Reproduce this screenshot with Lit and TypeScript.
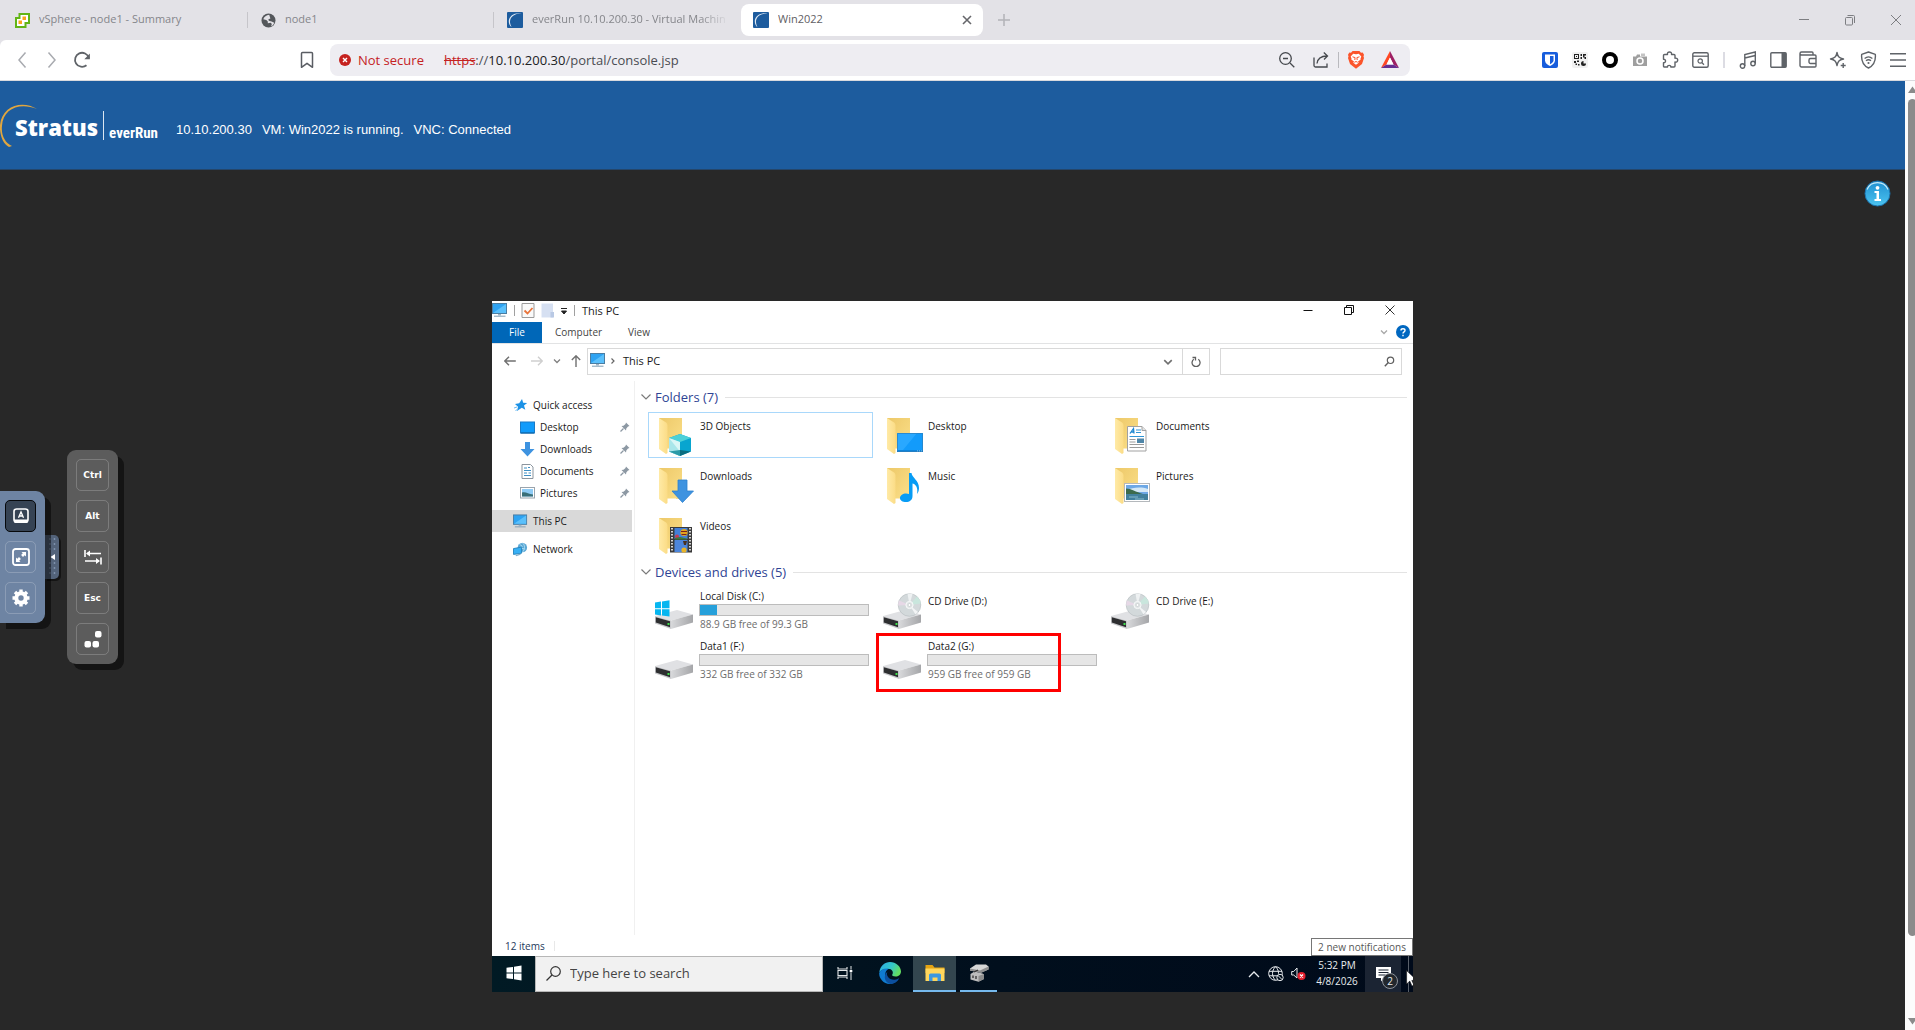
import { LitElement, html, css, svg, nothing, TemplateResult } from "lit";
import { customElement } from "lit/decorators.js";
import { classMap } from "lit/directives/class-map.js";
import { styleMap } from "lit/directives/style-map.js";

/* ---------- shared ---------- */

const reset = css`
  * {
    box-sizing: border-box;
  }
  button {
    font: inherit;
    color: inherit;
    background: none;
    border: 0;
    padding: 0;
    margin: 0;
    text-align: left;
  }
  input {
    font: inherit;
    color: inherit;
    background: none;
    border: 0;
    padding: 0;
    margin: 0;
    outline: 0;
    min-width: 0;
  }
  a {
    color: inherit;
    text-decoration: none;
  }
  svg {
    display: block;
    flex: none;
  }
`;

const icon = (w: number, h: number, body: unknown, box = `0 0 ${w} ${h}`) =>
  html`<svg width=${w} height=${h} viewBox=${box} fill="none" aria-hidden="true">${body}</svg>`;

/* ---------- browser icons ---------- */

const g = "#5f6368";

const vsphereIcon = icon(15, 15, svg`
  <path d="M4.500 1h9.500v9H10.500v4H1V5h3.500z" fill="#fff" stroke="#62b515" stroke-width="2"/>
  <rect x="7.500" y="3.500" width="3.500" height="3.500" fill="#f9a51b"/><rect x="3.500" y="7.500" width="3.500" height="3.500" fill="#f9a51b"/>`);

const globeIcon = icon(15, 15, svg`
  <circle cx="7.500" cy="7.500" r="7" fill="#54575b"/>
  <path d="M8.200 1.800C5.500 2 3 4 2.300 6.200l3 .8 1.500 1.600v1.600l3-.4 1 1.200-.6 2.200c1.500-.6 2.600-2 3-3.500l-2.600-1.300-2.800-.7-.4-1.500 2-.8z" fill="#e3e2e7"/>`);

const stratusIcon = icon(16, 16, svg`
  <rect width="16" height="16" rx="1" fill="#1d5c9e"/>
  <path d="M14.500 1.500C8 0 2.500 3.500 1.800 8.500c-.2 3 1 5.500 2.700 6.500C3 12 2.500 9.500 3.500 7 5 3.500 9 1.500 14.500 1.500z" fill="#dfe9f4"/>`);

const chromeIcons = {
  back: icon(16, 18, svg`<path d="M11.500 1.500 5 9l6.500 7.500" stroke="#a9abb0" stroke-width="1.500"/>`),
  forward: icon(16, 18, svg`<path d="M4.500 1.500 11 9l-6.500 7.500" stroke="#a9abb0" stroke-width="1.500"/>`),
  reload: icon(18, 18, svg`<path d="M13.500 14.200A7 7 0 1 1 15.800 7" stroke="${g}" stroke-width="1.800"/><path d="M16.900 2.500v5.800h-5.600z" fill="${g}"/>`),
  bookmark: icon(16, 18, svg`<path d="M2.500 2.500a1 1 0 0 1 1-1h9a1 1 0 0 1 1 1v13.800L8 12.300l-5.500 4z" stroke="#5a5d63" stroke-width="1.500" stroke-linejoin="round"/>`),
  zoomOut: icon(18, 18, svg`<circle cx="7.500" cy="7.500" r="5.800" stroke="#45484d" stroke-width="1.300"/><path d="M12 12l4.300 4.300M5 7.500h5" stroke="#45484d" stroke-width="1.300"/>`),
  share: icon(18, 18, svg`<path d="M2 6.500v8a1.500 1.500 0 0 0 1.500 1.500h11.500v-3.500" stroke="#45484d" stroke-width="1.300"/><path d="M5 12.500C5.500 8 8 5.200 15 5M11.800 1.500 15.500 5l-3.500 3.500" stroke="#45484d" stroke-width="1.300"/>`),
  brave: icon(16, 19, svg`
    <path d="M4.600 1h6.800L13 2.700l1.700-.2L16 4.800l-.5 1.600L16 8l-2 6-6 4.700L2 14 0 8l.5-1.600L0 4.800l1.300-2.300L3 2.700z" fill="#fb542b"/>
    <path d="M5.200 3.800 8 4.300l2.800-.5 2.500 2.600-.8 2 .2 1.100-2.700 1.900.7 1.300L8 14.800l-2.700-2.100.7-1.300-2.700-1.900.2-1.100-.8-2z" fill="#fff"/>
    <path d="M4.500 6.800l2.600.8-.3 2.400M11.500 6.800l-2.600.8.300 2.400M6.300 12.300 8 11.500l1.700.8" stroke="#fb542b" stroke-width="1"/>`),
  bat: icon(18, 17, svg`
    <path d="M9 0 0 17l5.500-3.500L9 6.500z" fill="#ff4724"/><path d="M9 0l9 17-5.500-3.500L9 6.500z" fill="#9e1f63"/><path d="M0 17h18l-5.500-3.500h-7z" fill="#662d91"/><path d="M9 6.500l3.500 7h-7z" fill="#fff"/>`),
  bitwarden: icon(16, 16, svg`<rect width="16" height="16" rx="2" fill="#175ddc"/><path d="M3 2.500h10v6c0 2.600-2.400 4.200-5 5.500-2.600-1.300-5-2.900-5-5.500z" fill="#fff"/><path d="M8 4h3.500v4.500c0 1.600-1.600 2.700-3.500 3.700z" fill="#175ddc"/>`),
  qr: icon(16, 16, svg`<rect width="16" height="16" rx="2" fill="#f1f1f1"/>
    <rect x="2.500" y="2.500" width="4" height="4" stroke="#222"/><path d="M4 4h1v1H4zM8.500 2h1.500v2H8.500zM11 2h3v1.500h-1.500v1.500H14V7h-1.500V5.500H11zM8.500 5H10v2H8.500zM2 9h2v2H2zM5 8.500h2V10H5zM3.500 11.500H5V13H3.500zM6 12h1.500v1.500H6z" fill="#222"/><circle cx="11.500" cy="11.500" r="2.500" fill="#222"/><path d="M11.500 8.500h3v3h-3z" fill="#f1f1f1"/>`),
  ring: icon(16, 16, svg`<circle cx="8" cy="8" r="6" stroke="#000" stroke-width="4"/>`),
  camera: icon(16, 16, svg`<path d="M1 4.500h3L5 2.500h3v2h7V14H1z" fill="#9f9f9f"/><path d="M9 1.500h4v2.500H9z" fill="#c4c4c4"/><circle cx="8" cy="9" r="3" fill="#9f9f9f" stroke="#fff" stroke-width="1.500"/>`),
  puzzle: icon(18, 18, svg`<path d="M2.500 4.500a1 1 0 0 1 1-1h3c-.8-3.400 4.800-3.400 4 0h2.500a1 1 0 0 1 1 1v2.700c3.600-.9 3.600 4.700 0 3.800V15a1 1 0 0 1-1 1H9.800c.3-2.200-3.600-2.200-3.300 0h-3a1 1 0 0 1-1-1v-3.200c2.700.3 2.700-3.900 0-3.600z" stroke="${g}" stroke-width="1.400" stroke-linejoin="round"/>`),
  tabSearch: icon(17, 16, svg`<rect x=".8" y=".8" width="15.400" height="14.400" rx="1.500" stroke="${g}" stroke-width="1.400"/><path d="M1 4.200h15" stroke="${g}" stroke-width="1.300"/><circle cx="8.200" cy="9" r="2.200" stroke="${g}" stroke-width="1.200"/><path d="M10 10.800l2 2" stroke="${g}" stroke-width="1.300"/>`),
  music: icon(18, 18, svg`<circle cx="3.500" cy="15" r="2.200" stroke="${g}" stroke-width="1.400"/><circle cx="14" cy="12.500" r="2.200" stroke="${g}" stroke-width="1.400"/><path d="M5.800 15V3.500L16.300 1v11.500M5.800 7 16.300 4.500" stroke="${g}" stroke-width="1.400"/>`),
  sidebar: icon(17, 16, svg`<rect x=".8" y=".8" width="15.400" height="14.400" rx="1" stroke="${g}" stroke-width="1.400"/><path d="M11.500 1H16v14h-4.500z" fill="${g}"/>`),
  wallet: icon(18, 17, svg`<path d="M14 3.500V2a1 1 0 0 0-1-1H2.500a1.500 1.500 0 0 0 0 3H16a1 1 0 0 1 1 1v10a1 1 0 0 1-1 1H2.500A1.500 1.500 0 0 1 1 14.500V2.500" stroke="${g}" stroke-width="1.400"/><path d="M17 7.500h-5.500a1.500 1.500 0 0 0-1.500 1.500v2a1.500 1.500 0 0 0 1.500 1.500H17" stroke="${g}" stroke-width="1.400"/>`),
  leo: icon(18, 18, svg`<path d="M8 1.500c.8 4.300 2.200 5.700 6.500 6.500-4.300.8-5.700 2.200-6.500 6.500-.8-4.300-2.200-5.700-6.500-6.500 4.300-.8 5.700-2.200 6.500-6.500z" stroke="${g}" stroke-width="1.400" stroke-linejoin="round"/><path d="M14.200 12v5M11.700 14.500h5" stroke="${g}" stroke-width="1.400"/>`),
  vpn: icon(17, 18, svg`<path d="M8.500 1 15.300 3.300c.6 6-1.300 11-6.800 13.700C3 14.300 1.100 9.300 1.700 3.300z" stroke="${g}" stroke-width="1.400" stroke-linejoin="round"/><path d="M4.600 7.500c2.300-2 5.500-2 7.800 0M6 9.800c1.500-1.300 3.500-1.300 5 0" stroke="${g}" stroke-width="1.300"/><circle cx="8.500" cy="12" r="1.100" fill="${g}"/>`),
  menu: icon(18, 16, svg`<path d="M1 1.800h16M1 8h16M1 14.200h16" stroke="${g}" stroke-width="1.600"/>`),
};

@customElement("browser-tabs")
class BrowserTabs extends LitElement {
  static styles = [
    reset,
    css`
      :host {
        display: flex;
        height: 40px;
        background: #e3e2e7;
        color: #85868b;
        font-size: 11px;
        line-height: 16px;
      }
      .tabs {
        display: flex;
        padding-left: 2px;
      }
      .tab {
        display: flex;
        align-items: center;
        gap: 9px;
        width: 246px;
        padding: 0 10px 0 13px;
        border-right: 1px solid transparent;
        border-image: linear-gradient(transparent 12px, #c6c5ca 12px, #c6c5ca 28px, transparent 28px) 1;
      }
      .tab.before {
        border-image: none;
      }
      .tab.active {
        width: 242px;
        height: 32px;
        margin: 4px 3px 0 1px;
        padding: 0 10px 0 12px;
        border: 0;
        border-radius: 8px;
        background: #fff;
        color: #5f6064;
      }
      .label {
        flex: 1;
        padding-bottom: 2px;
        overflow: hidden;
        white-space: nowrap;
      }
      .fade {
        -webkit-mask-image: linear-gradient(to right, #000 85%, transparent);
      }
      .new {
        display: grid;
        place-items: center;
        width: 36px;
      }
      .controls {
        display: flex;
        margin-left: auto;
      }
      .controls button {
        display: grid;
        place-items: center;
        width: 46px;
        padding-left: 8px;
      }
    `,
  ];
  render() {
    const tabs: [TemplateResult, string, string][] = [
      [vsphereIcon, "vSphere - node1 - Summary", ""],
      [globeIcon, "node1", ""],
      [stratusIcon, "everRun 10.10.200.30 - Virtual Machin", "before"],
      [stratusIcon, "Win2022", "active"],
    ];
    return html`
      <div class="tabs" role="tablist">
        ${tabs.map(
          ([ic, label, kind]) => html`
            <div class="tab ${kind}" role="tab" aria-selected=${kind === "active"}>
              ${ic}<span class="label ${kind === "before" ? "fade" : ""}">${label}</span>
              ${kind === "active"
                ? html`<button aria-label="Close tab">${icon(12, 12, svg`<path d="M2 2l8 8M10 2l-8 8" stroke="#66676b" stroke-width="1.600"/>`)}</button>`
                : nothing}
            </div>
          `
        )}
      </div>
      <button class="new" aria-label="New tab">${icon(12, 12, svg`<path d="M6 0v12M0 6h12" stroke="#b3b3b8" stroke-width="1.500"/>`)}</button>
      <div class="controls">
        <button aria-label="Minimize">${icon(10, 12, svg`<path d="M0 5.500h10" stroke="#7d7e82"/>`)}</button>
        <button aria-label="Restore">${icon(12, 12, svg`<rect x="1.500" y="3.500" width="7" height="7.500" rx="1" stroke="#7d7e82"/><path d="M3.500 1.500h6a1 1 0 0 1 1 1v6.500" stroke="#7d7e82"/>`)}</button>
        <button aria-label="Close">${icon(12, 12, svg`<path d="M1 1l10 10M11 1L1 11" stroke="#7d7e82"/>`)}</button>
      </div>
    `;
  }
}

@customElement("browser-toolbar")
class BrowserToolbar extends LitElement {
  static styles = [
    reset,
    css`
      :host {
        display: flex;
        align-items: center;
        height: 41px;
        padding: 0 2px 1px 7px;
        background: #fff;
        border-bottom: 1px solid #d9dade;
        border-radius: 6px 0 0 0;
        font-size: 13px;
      }
      .slot {
        display: grid;
        place-items: center;
        width: 30px;
        height: 32px;
      }
      .bookmark {
        margin: 0 8px 0 195px;
      }
      .url {
        flex: 1;
        display: flex;
        align-items: center;
        height: 32px;
        margin-right: 125px;
        padding: 0 3px 0 9px;
        border-radius: 8px;
        background: #eeedf2;
        color: #4a4c52;
      }
      .warn {
        display: flex;
        align-items: center;
        gap: 7px;
        color: #c5221f;
      }
      .address {
        flex: 1;
        margin-left: 20px;
        white-space: nowrap;
      }
      .scheme {
        color: #c5221f;
        text-decoration: line-through;
      }
      .host {
        color: #202124;
      }
      .rule {
        width: 1px;
        height: 16px;
        background: #b9b9be;
      }
      .gap {
        display: grid;
        place-items: center;
        width: 18px;
      }
      .gap .rule {
        width: 2px;
        background: #dcdce3;
      }
      .tool {
        display: grid;
        place-items: center;
        width: 34px;
        height: 32px;
      }
    `,
  ];
  render() {
    const i = chromeIcons;
    const slot = (name: string, ic: TemplateResult) => html`<button class="slot" aria-label=${name}>${ic}</button>`;
    const tool = (name: string, ic: TemplateResult) => html`<button class="tool" aria-label=${name}>${ic}</button>`;
    return html`
      ${slot("Back", i.back)}${slot("Forward", i.forward)}${slot("Reload", i.reload)}
      <button class="slot bookmark" aria-label="Bookmark">${i.bookmark}</button>
      <div class="url">
        <button class="warn">
          ${icon(12, 12, svg`<circle cx="6" cy="6" r="6" fill="#c5221f"/><path d="M4 4l4 4M8 4L4 8" stroke="#fff" stroke-width="1.400"/>`)}
          Not secure
        </button>
        <div class="address" role="textbox" aria-label="Address" contenteditable="true"><span class="scheme">https</span>://<span class="host">10.10.200.30</span>/portal/console.jsp</div>
        ${tool("Zoom", i.zoomOut)}${tool("Share", i.share)}
        <span class="rule"></span>
        ${tool("Shields", i.brave)}${tool("Rewards", i.bat)}
      </div>
      ${slot("Bitwarden", i.bitwarden)}${slot("QR code", i.qr)}${slot("Ring", i.ring)}${slot("Screenshot", i.camera)}
      ${slot("Extensions", i.puzzle)}${slot("Search tabs", i.tabSearch)}
      <span class="gap"><span class="rule"></span></span>
      ${slot("Playlist", i.music)}${slot("Sidebar", i.sidebar)}${slot("Wallet", i.wallet)}${slot("Leo", i.leo)}
      ${slot("VPN", i.vpn)}${slot("Menu", i.menu)}
    `;
  }
}

/* ---------- Stratus header ---------- */

@customElement("stratus-header")
class StratusHeader extends LitElement {
  static styles = [
    reset,
    css`
      :host {
        display: flex;
        align-items: center;
        height: 89px;
        padding-top: 9px;
        background: #1d5c9e;
        color: #fff;
        border-bottom: 1px solid #24466b;
      }
      .logo {
        position: relative;
        display: flex;
        align-items: center;
        width: 158px;
        height: 46px;
        padding: 0 0 5px 15px;
        margin-right: 18px;
      }
      .arc {
        position: absolute;
        left: -1px;
        top: -4px;
      }
      .brand {
        font: 800 22px/30px "Open Sans", sans-serif;
        width: 89px;
      }
      .product {
        height: 29px;
        margin-bottom: 4px;
        padding: 12px 0 0 5px;
        border-left: 1px solid #dbe6f1;
        font: 700 15px/20px "Liberation Sans Narrow", "Roboto Condensed", sans-serif;
      }
      .status {
        display: flex;
        gap: 10px;
        font: 13px/20px "Liberation Sans", Arial, sans-serif;
      }
    `,
  ];
  render() {
    return html`
      <a class="logo" href="#">
        <svg class="arc" width="40" height="46" viewBox="0 0 40 46" aria-hidden="true">
          <path d="M38 6C24-3 3 2 1 22c-.600 10 3 19 9 22l3-1C6 40 2 32 3 23 4 6 20-1 38 6z" fill="#e0a63f"/>
        </svg>
        <span class="brand">Stratus</span><span class="product">everRun</span>
      </a>
      <div class="status"><span>10.10.200.30</span><span>VM: Win2022 is running.</span><span>VNC: Connected</span></div>
    `;
  }
}

/* ---------- VNC control bar ---------- */

@customElement("vnc-controls")
class VncControls extends LitElement {
  static styles = [
    reset,
    css`
      :host {
        position: absolute;
        left: 0;
        top: 280px;
        display: flex;
        align-items: center;
        color: #fff;
        font: 700 9px/12px "DejaVu Sans", sans-serif;
      }
      .bar,
      .keys {
        display: flex;
        flex-direction: column;
        gap: 9px;
        box-shadow: 6px 6px 0 rgba(0, 0, 0, 0.5);
      }
      .bar {
        position: relative;
        z-index: 1;
        padding: 9px 9px 9px 5px;
        border-radius: 0 9px 9px 0;
        background: #6e84a3;
      }
      .handle {
        display: grid;
        place-items: center;
        width: 14px;
        height: 44px;
        margin-right: 8px;
        border-radius: 0 5px 5px 0;
        background: #53637a;
        box-shadow: 2px 2px 0 rgba(0, 0, 0, 0.5);
      }
      .keys {
        padding: 9px;
        border-radius: 9px;
        background: #5c5c5c;
      }
      .key {
        display: grid;
        place-items: center;
        width: 33px;
        height: 32px;
        border: 1px solid rgba(255, 255, 255, 0.2);
        border-radius: 5px;
      }
      .bar .key {
        width: 31px;
      }
      .key.on {
        background: #364354;
        border-color: #06080b;
      }
    `,
  ];
  render() {
    const dots = [4, 9, 14, 28, 33, 38].map(
      (y) => svg`<circle cx="5" cy=${y} r=".9" fill="#8094b0"/><circle cx="9.500" cy=${y} r=".9" fill="#8094b0"/>`
    );
    return html`
      <div class="bar">
        <button class="key on" aria-label="Extra keys">
          ${icon(16, 16, svg`<rect x="1" y="1" width="14" height="13" rx="2.500" stroke="#fff" stroke-width="1.600"/><path d="M1 11.500h14v2a1.500 1.500 0 0 1-1.500 1.500h-11A1.500 1.500 0 0 1 1 13.500z" fill="#fff"/><path d="M5.500 9.800 8 4l2.500 5.800M6.500 8h3" stroke="#fff" stroke-width="1.300"/>`)}
        </button>
        <button class="key" aria-label="Full screen">
          ${icon(18, 18, svg`<rect x="1" y="1" width="16" height="16" rx="2.500" stroke="#fff" stroke-width="1.800"/><path d="M9.500 4H14v4.500l-1.300-1.300-1.700 1.700-1.900-1.900 1.700-1.700zM8.500 14H4V9.500l1.300 1.300L7 9.100 8.900 11l-1.700 1.700z" fill="#fff"/>`)}
        </button>
        <button class="key" aria-label="Settings">
          ${icon(18, 18, svg`<circle cx="9" cy="9" r="4.700" stroke="#fff" stroke-width="4"/><path d="M9 .5v3M9 14.500v3M.5 9h3M14.500 9h3M3 3l2 2M13 13l2 2M15 3l-2 2M5 13l-2 2" stroke="#fff" stroke-width="3.400"/>`)}
        </button>
      </div>
      <button class="handle" aria-label="Hide control bar">
        ${icon(14, 44, svg`${dots}<path d="M10 19v6L5.500 22z" fill="#fff"/>`)}
      </button>
      <div class="keys">
        <button class="key">Ctrl</button>
        <button class="key">Alt</button>
        <button class="key" aria-label="Tab">
          ${icon(18, 16, svg`<path d="M1 1v7M3 4.500h14M17 8.500v7M1 12h14" stroke="#fff" stroke-width="1.600"/><path d="M2 4.500l4-3v6zM16 12l-4-3v6z" fill="#fff"/>`)}
        </button>
        <button class="key">Esc</button>
        <button class="key" aria-label="Ctrl Alt Del">
          ${icon(18, 18, svg`<rect x="11" y="1" width="6.500" height="6.500" rx="2" fill="#fff"/><rect x=".5" y="11" width="6.500" height="6.500" rx="2" fill="#fff"/><rect x="8.500" y="11" width="6.500" height="6.500" rx="2" fill="#fff"/>`)}
        </button>
      </div>
    `;
  }
}

/* ---------- Explorer icons ---------- */

const pcIcon = icon(16, 15, svg`
  <rect x=".5" y=".5" width="14" height="10" fill="#2ea3f2" stroke="#4b7ea3"/><path d="M1 10 14 1v9z" fill="#5bc0fb"/>
  <path d="M6 11h3v1.500H6z" fill="#9fb4c4"/><path d="M2 13.200h11.500" stroke="#7f9db3"/>`);

const navIcons = {
  star: icon(14, 14, svg`<path d="M8.500 1l1.200 3.800 4 .3-3.200 2.400 1.300 4.200-3.500-2L3.500 13l1-4.300L1.500 6l4.200-.8z" fill="#1c92e6"/><path d="M.5 10l3-1M2 13l2-2" stroke="#6fbcf3"/>`),
  desktop: icon(15, 13, svg`<rect x=".5" y="1" width="14" height="11" fill="#119bfa" stroke="#1a7ac5"/><path d="M1 12h13" stroke="#0a5d9c"/>`),
  downloads: icon(15, 15, svg`<path d="M5 0h5v7h4.500L7.500 14.500.5 7H5z" fill="#3e93e0"/>`),
  documents: icon(13, 15, svg`<path d="M1 .5h8.500l2.500 2.500v11.500H1z" fill="#fff" stroke="#8b959e"/><path d="M3 4h3M7 3.500h2M3 6.500h7M3 9h3M7.500 9h2.500M3 11.500h7" stroke="#3f8fc4" stroke-width="1.200"/>`),
  pictures: icon(15, 12, svg`<rect x=".5" y=".5" width="14" height="10.500" fill="#fff" stroke="#9aa4ad"/><rect x="2" y="2" width="11" height="7.500" fill="#8ecbf5"/><path d="M2 5.500c4-1 6 1.500 11 2v2H2z" fill="#3a6f78"/>`),
  network: icon(16, 15, svg`<circle cx="10" cy="5.500" r="5" fill="#5ba7d4"/><path d="M7 2l3 2-2 2 5 1M10 .5c3 2 3 7 0 10" stroke="#a9dbf2"/><path d="M.5 6.500 9 5v6.500l-8.500 1.200z" fill="#37b0f5" stroke="#2784bd"/><path d="M3 14l5-1.500" stroke="#7faecb" stroke-width="1.500"/>`),
};

const pin = icon(10, 10, svg`<path d="M6 .5 9.500 4 8 4.500 6.300 6.500 6 8.500 1.500 4l2-.3L5.500 2z" fill="#8c98a3"/><path d="M3.500 6.500 .5 9.500" stroke="#8c98a3" stroke-width="1.200"/>`);

const folder = (overlay: unknown) =>
  icon(42, 42, svg`
    <defs><linearGradient id="back" x1="0" y1="0" x2="1" y2="1"><stop offset="0" stop-color="#edc868"/><stop offset="1" stop-color="#fbe08a"/></linearGradient>
    <linearGradient id="flap" x1="0" y1="0" x2="1" y2="0"><stop offset="0" stop-color="#ffeaa6"/><stop offset="1" stop-color="#fbdc86"/></linearGradient></defs>
    <path d="M4 2h23v31H4z" fill="url(#back)"/><path d="M12 32.500h9v3h-9z" fill="#fff"/>
    <path d="M4 2l7 4.500q1.500 1 1.500 3V37l-1.500 1-7-5z" fill="url(#flap)"/>${overlay}`);

const folderIcons = {
  objects: folder(svg`
    <path d="M25 18l11 4v13.500L25 40l-11-4.500V22z" fill="#08a5cf"/>
    <path d="M25 18l11 4-11 4-11-4z" fill="#4cd0d8"/><path d="M14 22l11 4v14l-11-4.500z" fill="#a9e6ea"/>
    <path d="M14 22l11 4v9.500z" fill="#d9f6f6"/><path d="M14 35.500 25 34v6z" fill="#2b9ba8"/><path d="M25 34l11 1.500L25 40z" fill="#0b6d80"/>`),
  desktop: folder(svg`<rect x="14" y="17" width="26" height="19" fill="#129bfb"/><path d="M14 17h20L20 34h-6z" fill="#29a8ff"/><path d="M14 34.500h26V36H14z" fill="#0a6cb8"/><path d="M34 35.200h1m1 0h1m1 0h1" stroke="#fff"/><path d="M14.500 17.500h25v18h-25z" stroke="#2b83c4" stroke-width=".8"/>`),
  documents: folder(svg`<path d="M16.500 10.500H31l4 4V35H16.500z" fill="#fff" stroke="#a1a1a1"/><path d="M31 10.500v4h4" stroke="#a1a1a1" fill="#e3e3e3"/>
    <path d="M19 17.500l3.500-5 .5 5M20.500 16h2.500" stroke="#1d87d0" stroke-width="1.300"/><path d="M25 14h5M25 16.500h5M18.500 20.500h14.500" stroke="#2f95d6"/><path d="M18.500 23.500h6M18.500 26h6M18.500 28.500h14.500M18.500 31.500h14.500" stroke="#9b9b9b"/><rect x="26" y="22.500" width="7" height="4.500" fill="#4f86a8"/>`),
  downloads: folder(svg`<path d="M23 14h9v11h6.500L27.500 36.500 17 25h6z" fill="#3e93e0" stroke="#2c80cf" stroke-width=".8"/>`),
  music: folder(svg`<path d="M26 7h2.500c.5 5 7.500 7 7.500 15 0 2.500-.8 4.500-2 6 1.500-7-2-10-4.500-10.500V30c0 4-3 6-6.500 6s-6-1.500-6-4 3-4.500 6-4.500c1.200 0 2.200.2 3 .6z" fill="#079cf5"/>`),
  pictures: folder(svg`<rect x="13.500" y="17.500" width="25" height="18" fill="#fff" stroke="#b4b8bc"/><rect x="15" y="19" width="22" height="15" fill="#6da8e6"/><path d="M15 24c6-2 14-4 22-1v3H15z" fill="#d4e8f6"/><path d="M15 22.500c5 0 10 3.500 17 5.500H15z" fill="#3c6b4c"/><path d="M15 28h22v6H15z" fill="#41809c"/><path d="M18 31h9M24 33h9" stroke="#86b9cc"/>`),
  videos: folder(svg`<rect x="15" y="11" width="22" height="25.500" fill="#3a3a3a"/><path d="M17 12v24M35 12v24" stroke="#e6e6e6" stroke-width="1.800" stroke-dasharray="1.600 1.400"/><rect x="19.500" y="12" width="13" height="11" fill="#4380d8"/><rect x="19.500" y="24" width="13" height="12" fill="#4d86dc"/>
    <circle cx="29" cy="16.500" r="3.600" fill="#e0a51f"/><path d="M26 15.500h6M26.500 18.500h5" stroke="#7d1f1f"/><circle cx="22" cy="20.500" r="2" fill="#c93b53"/><path d="M20 22l5-1 7 1.500v1H20z" fill="#3c7a3e"/><path d="M28 25h4l-1 4h-2z" fill="#4a3120"/><circle cx="29" cy="34" r="2.600" fill="#e8b428"/>`),
};

const drive = (overlay: unknown = nothing) =>
  icon(42, 42, svg`
    <defs><linearGradient id="side" x1="0" y1="0" x2="1" y2="0"><stop offset="0" stop-color="#d8d9db"/><stop offset="1" stop-color="#a5a6a9"/></linearGradient></defs>
    <path d="M0 25l22-6 16 4.500L16 29.500z" fill="#e0e1e4"/><path d="M16 29.500l22-6v8L16 38z" fill="url(#side)"/>
    <path d="M0 25l16 4.500V38L0 32.500z" fill="#c8c9cc"/><path d="M.8 26.200 15 30.200v6L.8 31.600z" fill="#2d2e30"/><rect x="12.500" y="32" width="2" height="2" fill="#3fe04c"/>${overlay}`);

const driveIcons = {
  system: drive(svg`<path d="M0 11.500l6-.9v6.600H0zM7 10.500l7.500-1.200v7.900H7zM0 18.200h6v6.300l-6-.9zM7 18.200h7.500v7.200L7 24.500z" fill="#06b6f0"/>`),
  cd: drive(svg`<circle cx="26.500" cy="14" r="11.300" fill="#d3d9db" stroke="#b4babd" stroke-width=".6"/><path d="M26.500 14 34 5.500a11.300 11.300 0 0 1 3.800 7z" fill="#c9e6dd"/><path d="M26.500 14 16 9.500a11.300 11.300 0 0 0-.8 5z" fill="#e6d8e6"/><path d="M26.500 14l-2-11.200a11 11 0 0 1 5 .3z" fill="#eef1f2"/><path d="M26.500 14l6 9.500 2.500-2.500z" fill="#f2f4f5"/><circle cx="26.500" cy="14" r="3.600" fill="#e2e6e7" stroke="#f8fafa"/><circle cx="26.500" cy="14" r="1.500" fill="#fff" stroke="#b9bfc1" stroke-width=".6"/>`),
  disk: drive(),
};

const chevronDown = (color: string, w = 8) => icon(w, w, svg`<path d="M1 2.500 4 5.500 7 2.500" stroke=${color} stroke-width="1.300"/>`, "0 0 8 8");

interface Drive {
  name: string;
  ic: TemplateResult;
  used?: number;
  free?: string;
  marked?: boolean;
}

@customElement("explorer-window")
class ExplorerWindow extends LitElement {
  static styles = [
    reset,
    css`
      :host {
        flex: 1;
        display: flex;
        flex-direction: column;
        background: #fff;
        color: #1a1a1a;
        font-size: 10px;
        line-height: 16px;
      }
      .title {
        display: flex;
        align-items: center;
        height: 21px;
        padding-bottom: 2px;
        font-size: 11px;
      }
      .sep {
        width: 1px;
        height: 11px;
        background: #a0a0a0;
      }
      .quick {
        display: flex;
        align-items: center;
        gap: 6px;
        margin-right: 7px;
      }
      .controls {
        display: flex;
        margin: -2px 3px 0 auto;
      }
      .controls button {
        display: grid;
        place-items: center;
        width: 41px;
        height: 18px;
      }
      .ribbon {
        display: flex;
        align-items: center;
        height: 22px;
        border-bottom: 1px solid #e2e3e4;
        color: #444;
      }
      .ribbon .tab {
        height: 21px;
        padding: 0 13px 2px;
      }
      .ribbon .file {
        width: 50px;
        padding: 0 0 2px;
        background: #0067b8;
        color: #fff;
        text-align: center;
      }
      .ribbon .end {
        display: flex;
        align-items: center;
        gap: 8px;
        margin: 0 3px 0 auto;
        padding-bottom: 2px;
      }
      .nav {
        display: flex;
        height: 37px;
        padding: 4px 11px 6px 4px;
      }
      .nav .go {
        display: grid;
        place-items: center;
        width: 27px;
        padding-bottom: 1px;
      }
      .nav .go.caret {
        width: 14px;
      }
      .nav .go.up {
        width: 23px;
      }
      .address {
        flex: 1;
        display: flex;
        align-items: center;
        padding-left: 2px;
        border: 1px solid #d9d9d9;
        font-size: 11px;
      }
      .crumb {
        flex: 1;
        display: flex;
        align-items: center;
        gap: 4px;
        padding-bottom: 2px;
      }
      .crumb span {
        margin-left: 3px;
      }
      .address .drop {
        padding: 0 9px;
      }
      .address .refresh {
        display: grid;
        place-items: center;
        align-self: stretch;
        width: 27px;
        border-left: 1px solid #d9d9d9;
      }
      .search {
        display: flex;
        align-items: center;
        width: 182px;
        margin-left: 10px;
        padding: 0 6px;
        border: 1px solid #d9d9d9;
      }
      .search input {
        flex: 1;
      }
      .body {
        flex: 1;
        display: flex;
      }
      .tree {
        display: flex;
        flex-direction: column;
        width: 143px;
        padding: 13px 2px 0 0;
        border-right: 1px solid #f0f0f0;
      }
      .node {
        display: flex;
        align-items: center;
        gap: 5px;
        height: 22px;
        padding: 0 2px 0 21px;
      }
      .node.child {
        padding-left: 28px;
      }
      .node.root,
      .node.last {
        margin-bottom: 6px;
      }
      .node.selected {
        background: #d9d9d9;
      }
      .node svg:first-child {
        width: 15px;
      }
      .node span {
        flex: 1;
      }
      .content {
        flex: 1;
        padding: 2px 6px 0 6px;
      }
      .group {
        display: flex;
        align-items: center;
        gap: 4px;
        width: 100%;
        height: 29px;
        padding-bottom: 1px;
        color: #2f4494;
        font-size: 13px;
      }
      .group::after {
        content: "";
        flex: 1;
        height: 1px;
        margin-left: 3px;
        background: #e3e3e3;
      }
      .tiles {
        display: grid;
        grid-template-columns: repeat(3, 228px);
        grid-auto-rows: 46px;
        row-gap: 4px;
        padding-left: 7px;
      }
      .tile {
        position: relative;
        display: flex;
        align-items: flex-start;
        gap: 3px;
        width: 225px;
        padding: 3px 0 0 6px;
        border: 1px solid transparent;
      }
      .tile.focused {
        border-color: #a9d8fb;
      }
      .name {
        padding-top: 2px;
      }
      .detail {
        display: flex;
        flex-direction: column;
        margin: -3px 0 0 -1px;
        color: #6d6d6d;
      }
      .detail span {
        padding-left: 1px;
      }
      .detail .label {
        color: #1a1a1a;
      }
      .usage {
        width: 170px;
        height: 12px;
        border: 1px solid #bcbcbc;
        background: #e6e6e6;
      }
      .fill {
        height: 100%;
        background: #26a0da;
      }
      .mark {
        position: absolute;
        left: -1px;
        top: -5px;
        width: 185px;
        height: 59px;
        border: 3px solid #f00;
      }
      .status {
        display: flex;
        align-items: center;
        gap: 9px;
        height: 21px;
        padding-left: 13px;
        color: #1e395b;
      }
      .status::after {
        content: "";
        width: 1px;
        height: 10px;
        background: #e8e8e8;
      }
    `,
  ];

  private drives: Drive[] = [
    { name: "Local Disk (C:)", ic: driveIcons.system, used: 10, free: "88.9 GB free of 99.3 GB" },
    { name: "CD Drive (D:)", ic: driveIcons.cd },
    { name: "CD Drive (E:)", ic: driveIcons.cd },
    { name: "Data1 (F:)", ic: driveIcons.disk, used: 0, free: "332 GB free of 332 GB" },
    { name: "Data2 (G:)", ic: driveIcons.disk, used: 0, free: "959 GB free of 959 GB", marked: true },
  ];

  private folders: [string, TemplateResult][] = [
    ["3D Objects", folderIcons.objects],
    ["Desktop", folderIcons.desktop],
    ["Documents", folderIcons.documents],
    ["Downloads", folderIcons.downloads],
    ["Music", folderIcons.music],
    ["Pictures", folderIcons.pictures],
    ["Videos", folderIcons.videos],
  ];

  private group(label: string) {
    return html`<button class="group">${icon(10, 10, svg`<path d="M.5 2.500 5 7l4.500-4.500" stroke="#7a7a7a" stroke-width="1.200"/>`)}${label}</button>`;
  }

  private driveTile(d: Drive) {
    return html`
      <button class="tile">
        ${d.ic}
        ${d.free
          ? html`<div class="detail">
              <span class="label">${d.name}</span>
              <div class="usage"><div class="fill" style=${styleMap({ width: `${d.used}%` })}></div></div>
              <span>${d.free}</span>
            </div>`
          : html`<span class="name">${d.name}</span>`}
        ${d.marked ? html`<div class="mark"></div>` : nothing}
      </button>
    `;
  }

  render() {
    const nodes: [string, TemplateResult, string][] = [
      ["Quick access", navIcons.star, ""],
      ["Desktop", navIcons.desktop, "child"],
      ["Downloads", navIcons.downloads, "child"],
      ["Documents", navIcons.documents, "child"],
      ["Pictures", navIcons.pictures, "child last"],
      ["This PC", pcIcon, "root selected"],
      ["Network", navIcons.network, "root"],
    ];
    return html`
      <div class="title">
        <div class="quick">
          ${pcIcon}<span class="sep"></span>
          ${icon(14, 15, svg`<path d="M1 .5h12v14H1z" fill="#fafafa" stroke="#9b9b9b"/><path d="M3.500 7.500l3 3 5-5.500" stroke="#e8743b" stroke-width="1.800"/>`)}
          ${icon(13, 15, svg`<path d="M.5 .5H12v14H.5z" fill="#d6e0f2"/><path d="M9.500 9H13v5.500H9.500z" fill="#b9c9e4"/>`)}
          ${icon(8, 8, svg`<path d="M1 1.500h6M1.500 4h5L4 7z" stroke="#222" fill="#222"/>`)}
          <span class="sep"></span>
        </div>
        <span>This PC</span>
        <div class="controls">
          <button aria-label="Minimize">${icon(10, 10, svg`<path d="M.5 5.500h9" stroke="#111"/>`)}</button>
          <button aria-label="Restore">${icon(10, 10, svg`<path d="M.5 2.500h7v7h-7zM2.500 2.500v-2h7v7h-2" stroke="#111"/>`)}</button>
          <button aria-label="Close">${icon(10, 10, svg`<path d="M.5 .5l9 9M9.500 .5l-9 9" stroke="#333"/>`)}</button>
        </div>
      </div>
      <div class="ribbon">
        <button class="tab file">File</button><button class="tab">Computer</button><button class="tab">View</button>
        <div class="end">
          <button aria-label="Expand ribbon">${chevronDown("#a8a8a8")}</button>
          <button aria-label="Help">${icon(14, 14, svg`<circle cx="7" cy="7" r="7" fill="#0067c0"/><path d="M5 5.500C5 3.200 9 3.200 9 5.500 9 7 7 6.800 7 8.500M7 9.800v1.400" stroke="#fff" stroke-width="1.400"/>`)}</button>
        </div>
      </div>
      <div class="nav">
        <button class="go" aria-label="Back">${icon(12, 10, svg`<path d="M.8 5h11M5 .8.800 5 5 9.200" stroke="#707070" stroke-width="1.400"/>`)}</button>
        <button class="go" aria-label="Forward">${icon(12, 10, svg`<path d="M0 5h11M7 .8 11.200 5 7 9.200" stroke="#cfcfcf" stroke-width="1.400"/>`)}</button>
        <button class="go caret" aria-label="Recent locations">${chevronDown("#808080")}</button>
        <button class="go up" aria-label="Up">${icon(10, 12, svg`<path d="M5 12V1M.8 5 5 .8 9.200 5" stroke="#707070" stroke-width="1.400"/>`)}</button>
        <div class="address">
          <button class="crumb">${pcIcon}${icon(6, 8, svg`<path d="M1.500 1.500 4 4 1.500 6.500" stroke="#666" stroke-width="1.200"/>`)}<span>This PC</span></button>
          <button class="drop" aria-label="Previous locations">${chevronDown("#707070", 10)}</button>
          <button class="refresh" aria-label="Refresh">${icon(10, 11, svg`<path d="M2.800 3.300a4 4 0 1 0 4.500 0M1.500 1.500h3v3" stroke="#606060" stroke-width="1.300"/>`)}</button>
        </div>
        <label class="search">
          <input type="text" aria-label="Search This PC" />
          ${icon(11, 11, svg`<circle cx="6.500" cy="4.300" r="3.200" stroke="#606060" stroke-width="1.200"/><path d="M4.300 6.600.800 10.200" stroke="#606060" stroke-width="1.400"/>`)}
        </label>
      </div>
      <div class="body">
        <nav class="tree">
          ${nodes.map(([label, ic, kind]) => html`<button class="node ${kind}">${ic}<span>${label}</span>${kind.includes("child") ? pin : nothing}</button>`)}
        </nav>
        <main class="content">
          ${this.group("Folders (7)")}
          <div class="tiles">
            ${this.folders.map(([name, ic], n) => html`<button class=${classMap({ tile: true, focused: n === 0 })}>${ic}<span class="name">${name}</span></button>`)}
          </div>
          ${this.group("Devices and drives (5)")}
          <div class="tiles">${this.drives.map((d) => this.driveTile(d))}</div>
        </main>
      </div>
      <div class="status">12 items</div>
    `;
  }
}

/* ---------- Windows taskbar ---------- */

@customElement("task-bar")
class TaskBar extends LitElement {
  static styles = [
    reset,
    css`
      :host {
        position: relative;
        display: flex;
        height: 36px;
        background: linear-gradient(to right, #011a24, #010f1d 55%, #000a1a);
        color: #e8ebee;
        font-size: 10px;
        line-height: 16px;
      }
      .start,
      .app {
        display: grid;
        place-items: center;
        width: 43px;
        border-bottom: 2px solid transparent;
      }
      .search {
        display: flex;
        align-items: center;
        gap: 9px;
        width: 288px;
        padding: 0 0 2px 10px;
        border: 1px solid #b7b7b7;
        background: #f1f1f1;
        font-size: 13px;
      }
      .search input {
        flex: 1;
        color: #444;
      }
      .search input::placeholder {
        color: #444;
        opacity: 1;
      }
      .app.wide {
        width: 47px;
      }
      .app.open {
        background: #33464f;
        border-color: #76b9ed;
      }
      .app.idle {
        width: 37px;
        margin-left: 4px;
        border-color: #76b9ed;
      }
      .tray {
        display: flex;
        align-items: center;
        margin-left: auto;
      }
      .tray .item {
        display: grid;
        place-items: center;
        width: 22px;
      }
      .clock {
        width: 56px;
        padding-bottom: 2px;
        text-align: center;
      }
      .notify {
        display: grid;
        place-items: center;
        position: relative;
        width: 36px;
        height: 36px;
        background: #1b2433;
      }
      .badge {
        position: absolute;
        left: 17px;
        top: 17px;
        width: 16px;
        height: 16px;
        border: 1px solid #8d9299;
        border-radius: 8px;
        background: #22272d;
        line-height: 14px;
        text-align: center;
      }
      .peek {
        width: 5px;
        height: 36px;
        margin-left: 7px;
        border-left: 1px solid #59606b;
      }
      .pointer {
        position: absolute;
        right: -5px;
        top: 14px;
      }
      .tip {
        position: absolute;
        right: 0;
        top: -18px;
        padding: 0 6px;
        border: 1px solid #767676;
        background: #fff;
        color: #575757;
        white-space: nowrap;
      }
    `,
  ];
  render() {
    return html`
      <button class="start" aria-label="Start">${icon(16, 16, svg`<path d="M.5 2.800 7 1.900v5.600H.5zM8 1.700 15.500.6v6.900H8zM.5 8.500H7v5.600l-6.500-.9zM8 8.500h7.500v6.900L8 14.300z" fill="#fff"/>`)}</button>
      <label class="search">
        ${icon(15, 15, svg`<circle cx="9.500" cy="5.500" r="4.800" stroke="#333" stroke-width="1.200"/><path d="M6 9 .5 14.500" stroke="#333" stroke-width="1.300"/>`)}
        <input type="text" placeholder="Type here to search" aria-label="Search" />
      </label>
      <button class="app" aria-label="Task view">${icon(16, 14, svg`<path d="M1 1v2h9V1M1 13v-2h9v2M1 4.500h9v5H1z" stroke="#e3e6e8" stroke-width="1.100"/><path d="M14 0v3M14 7v7" stroke="#e3e6e8"/><circle cx="14" cy="5" r="1.500" fill="#fff"/>`)}</button>
      <button class="app wide" aria-label="Edge">
        ${icon(22, 22, svg`
          <defs><linearGradient id="e1" x1="0" y1="0" x2="1" y2=".4"><stop offset="0" stop-color="#2aa9e8"/><stop offset=".6" stop-color="#35c7c8"/><stop offset="1" stop-color="#62dd62"/></linearGradient></defs>
          <path d="M.3 10.500C1 4 6 0 11 0c6 0 11 4.500 11 9.500 0 3-2.500 5-5.500 5-2.300 0-3.600-.7-3.300-1.700 1.300-1.600.8-5.300-2.700-5.800C6 6.500 2 7.500.3 10.500z" fill="url(#e1)"/>
          <path d="M.2 11C1.500 7.500 5.500 6 10 6.700 7 8 6 10.500 6.500 13.500 7.300 18 12 20.500 17.500 19 14 23 6.500 23 3 18.500 1 16 0 14 .2 11z" fill="#0f7bd0"/>
          <path d="M8.500 9.500c-2 4 1.500 8.500 7 8.300 2.300-.2 3.800-1.200 4.800-1.500C18.500 20 15 22 11.500 22 6 21 3.500 14 8.500 9.500z" fill="#0c4f9e"/>`)}
      </button>
      <button class="app open" aria-label="File Explorer">
        ${icon(20, 17, svg`<path d="M.5 0h7l2 2.500h10V8H.5z" fill="#e4a413"/><path d="M.5 3.500h19V16H.5z" fill="#ffd65c"/><path d="M4 16V10a1.500 1.500 0 0 1 1.500-1.500h9A1.500 1.500 0 0 1 16 10v6h-3.500v-3.500h-5V16z" fill="#3b97e0"/>`)}
      </button>
      <button class="app idle" aria-label="Server Manager">
        ${icon(20, 18, svg`<path d="M1 4.500 7 .5h10l2.500 2v3L12 8.500 1 6.500z" fill="#d6d6d6"/><path d="M1 4.500 11 6.500l8.500-4v3L12 9 1 6.500z" fill="#8f8f8f"/><path d="M1.500 10l4-2.500 8 2 1.500 1v4.500l-5.500 2.700-8-2.200z" fill="#bdbdbd"/><path d="M9.500 12l5.500-2v5l-5.500 2.700z" fill="#8d8d8d"/><path d="M4 11.500v2.500M7 12v3M5 8l4-2" stroke="#333" stroke-width="1.300"/>`)}
      </button>
      <div class="tray">
        <button class="item" aria-label="Show hidden icons">${icon(12, 8, svg`<path d="M1 7l5-5 5 5" stroke="#e8ebee" stroke-width="1.300"/>`)}</button>
        <button class="item" aria-label="Network">
          ${icon(16, 16, svg`<circle cx="7.500" cy="7.500" r="6.800" stroke="#e8ebee"/><path d="M1 5.300h13M1 9.800h8M7.500.7c-4 4-4 9.600 0 13.600M7.500.7c2.300 2 3.200 4.500 3 7" stroke="#e8ebee"/><circle cx="12" cy="11.500" r="3.200" fill="#010d1b" stroke="#e8ebee"/><path d="M9.800 9.300l4.400 4.400" stroke="#e8ebee"/>`)}
        </button>
        <button class="item" aria-label="Volume muted">
          ${icon(15, 14, svg`<path d="M.7 4.500h2L6 1v10L2.700 8h-2z" stroke="#e8ebee"/><circle cx="10.500" cy="9" r="4" fill="#e5202e"/><path d="M9 7.500l3 3M12 7.500l-3 3" stroke="#fff" stroke-width="1.200"/>`)}
        </button>
        <div class="clock">5:32 PM<br />4/8/2026</div>
        <button class="notify" aria-label="Notifications">
          ${icon(15, 15, svg`<path d="M0 0h15v11H8l-3 3.500V11H0z" fill="#fff"/><path d="M2.500 3h10M2.500 5.500h10M2.500 8h7" stroke="#1b2433"/>`)}
          <span class="badge">2</span>
        </button>
        <button class="peek" aria-label="Show desktop"></button>
      </div>
      <div class="tip" role="tooltip">2 new notifications</div>
      <svg class="pointer" width="12" height="17" viewBox="0 0 12 17" aria-hidden="true"><path d="M.6.600v13.500l3.200-3 2.200 5 2-1-2.200-4.700H11z" fill="#fff" stroke="#111" stroke-width=".6"/></svg>
    `;
  }
}

/* ---------- page ---------- */

@customElement("app-root")
class AppRoot extends LitElement {
  static styles = [
    reset,
    css`
      :host {
        display: flex;
        flex-direction: column;
        min-height: 100vh;
        background: #e3e2e7;
        font-family: "Open Sans", "Noto Sans", sans-serif;
      }
      .view {
        flex: 1;
        display: flex;
      }
      .page {
        flex: 1;
        display: flex;
        flex-direction: column;
        background: #282828;
      }
      .stage {
        position: relative;
        flex: 1;
        display: flex;
        padding: 131px 492px 38px;
      }
      .screen {
        flex: 1;
        display: flex;
        flex-direction: column;
        overflow: hidden;
      }
      .info {
        position: absolute;
        right: 14px;
        top: 10px;
      }
      .scroll {
        display: flex;
        flex-direction: column;
        width: 10px;
        overflow: hidden;
        background: #fcfcfc;
      }
      .arrow {
        display: flex;
        height: 18px;
        padding: 5px 0 0 3px;
      }
      .thumb {
        flex: 11;
        width: 9px;
        margin-left: 3px;
        border-radius: 5px;
        background: #8b8b8b;
      }
      .track {
        flex: 1;
      }
    `,
  ];
  render() {
    return html`
      <browser-tabs></browser-tabs>
      <browser-toolbar></browser-toolbar>
      <div class="view">
        <div class="page">
          <stratus-header></stratus-header>
          <div class="stage">
            <vnc-controls></vnc-controls>
            <div class="screen"><explorer-window></explorer-window><task-bar></task-bar></div>
            <button class="info" aria-label="Information">
              ${icon(27, 27, svg`
                <defs><linearGradient id="i" x1="0" y1="0" x2="0" y2="1"><stop offset="0" stop-color="#1f8fd0"/><stop offset="1" stop-color="#4cc4f0"/></linearGradient></defs>
                <circle cx="13.500" cy="13.500" r="12.500" fill="url(#i)" stroke="#1a72ad"/><path d="M3 9.500a11.500 11.500 0 0 1 21 0" stroke="#c5e9f8" stroke-width="1.300"/>
                <circle cx="13.500" cy="7.800" r="1.900" fill="#fff"/><path d="M10.500 11h4.500v8h2v2h-6.500v-2h2v-6h-2z" fill="#fff"/>`)}
            </button>
          </div>
        </div>
        <div class="scroll" aria-hidden="true">
          <div class="arrow">${icon(10, 8, svg`<path d="M4.500.5 9 7H0z" fill="#8b8b8b"/>`)}</div>
          <div class="thumb"></div>
          <div class="track"></div>
          <div class="arrow">${icon(10, 8, svg`<path d="M4.500 7.500 9 1H0z" fill="#8b8b8b"/>`)}</div>
        </div>
      </div>
    `;
  }
}
